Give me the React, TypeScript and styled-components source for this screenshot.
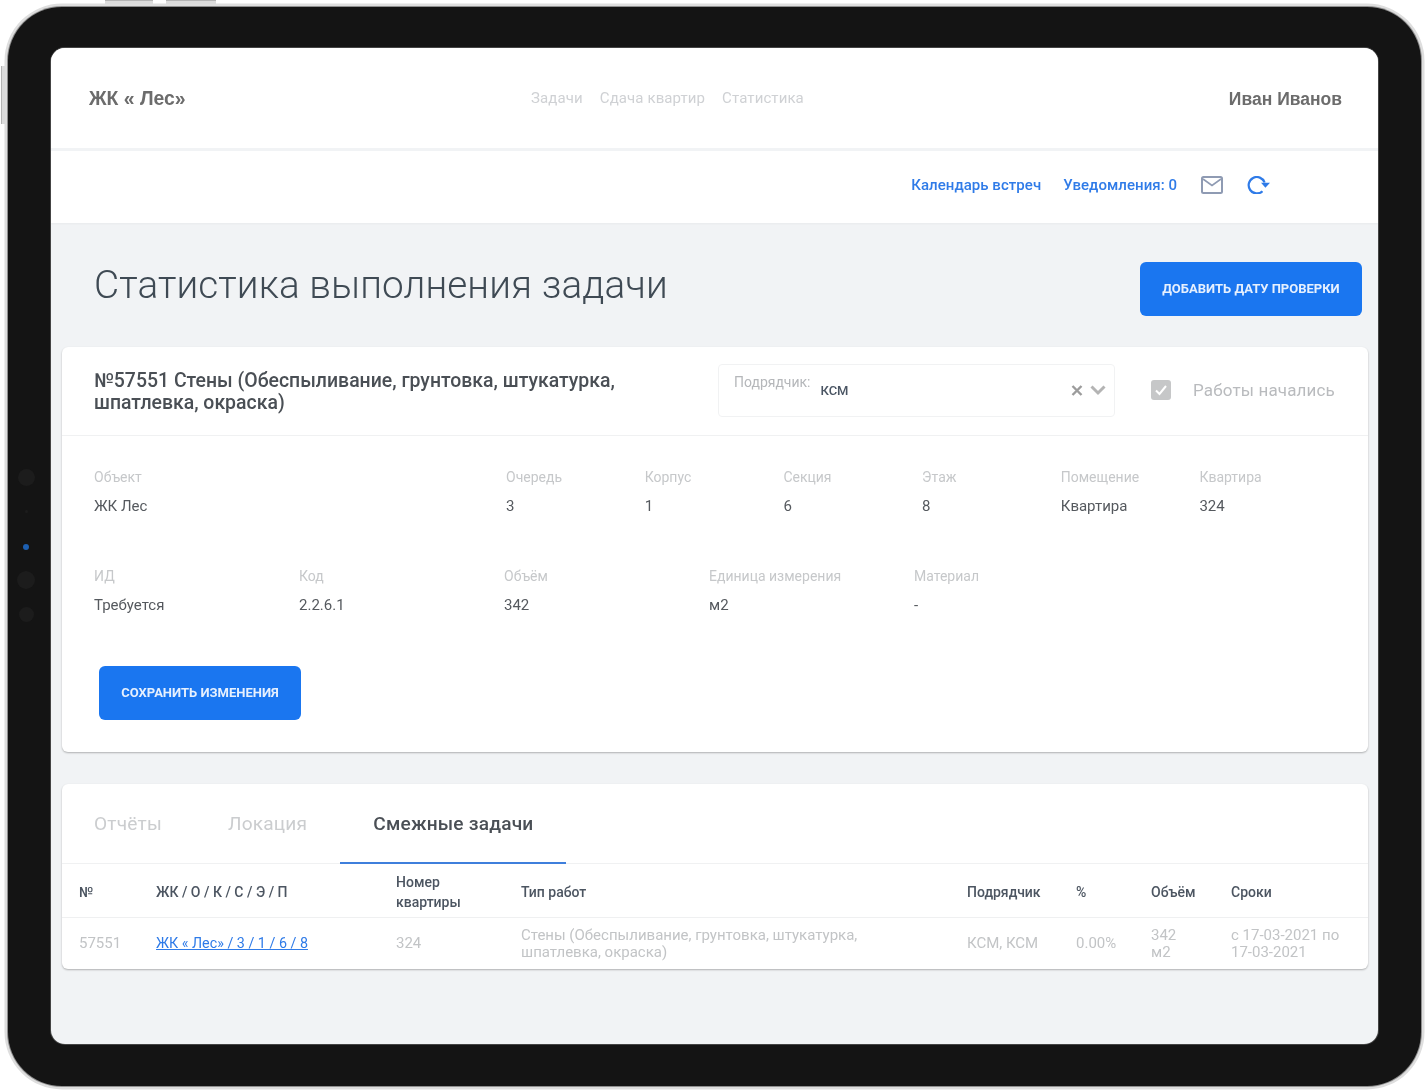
import React from "react";
import styled, { createGlobalStyle } from "styled-components";

const Global = createGlobalStyle`
  html, body { margin: 0; padding: 0; background: #fff; }
  body { font-family: Roboto, "Liberation Sans", sans-serif; }
  * { box-sizing: border-box; }
`;

const Stage = styled.div`
  width: 1426px;
  height: 1092px;
  padding: 7px 5px 6px 8px;
  overflow: hidden;
`;

const Device = styled.div`
  width: 1413px;
  height: 1079px;
  position: relative;
  background: #141414;
  border-radius: 54px;
  box-shadow: 0 0 0 1px #8f8f8f, 0 0 0 3.5px #dedede;
  padding: 41px 43px 42px 43px;
`;

const SideKey = styled.span`
  position: absolute;
  left: -7px;
  top: 59px;
  width: 4px;
  height: 58px;
  background: #dcdcdc;
  border-left: 1px solid #b5b5b5;
`;

const TopKey = styled.span<{ $left: number; $w: number }>`
  position: absolute;
  top: -7px;
  left: ${(p) => p.$left}px;
  width: ${(p) => p.$w}px;
  height: 4px;
  background: #dcdcdc;
  border-top: 1px solid #b5b5b5;
`;

const Lens = styled.span<{ $top: number; $size: number; $blue?: boolean }>`
  position: absolute;
  left: ${(p) => 18 - p.$size / 2}px;
  top: ${(p) => p.$top - p.$size / 2}px;
  width: ${(p) => p.$size}px;
  height: ${(p) => p.$size}px;
  border-radius: 50%;
  background: ${(p) => (p.$blue ? "#1d5fb0" : "#1c1c1c")};
`;

const Screen = styled.div`
  height: 100%;
  background: #f1f3f5;
  border-radius: 14px;
  overflow: hidden;
  display: flex;
  flex-direction: column;
  box-shadow: 0 0 0 1px #444;
  filter: blur(0.6px);
`;

const Header = styled.header`
  height: 100px;
  flex: none;
  background: #fff;
  display: grid;
  grid-template-columns: 1fr auto 1fr;
  align-items: center;
  padding: 1px 36px 0 38px;
`;

const Brand = styled.div`
  font-family: "Liberation Sans", Arial, sans-serif;
  font-weight: 700;
  font-size: 19.4px;
  color: #6c6c6c;
`;

const Nav = styled.nav`
  display: flex;
  gap: 17px;
  font-size: 15px;
  letter-spacing: 0.1px;
  color: #cfd1d4;
  margin: 0 96px 2px 0;
`;

const User = styled.div`
  justify-self: end;
  font-family: "Liberation Sans", Arial, sans-serif;
  font-weight: 700;
  font-size: 17.5px;
  color: #6c6c6c;
  margin-top: 1px;
`;

const SubBar = styled.div`
  height: 72px;
  flex: none;
  margin-top: 3px;
  background: #fff;
  display: flex;
  align-items: center;
  justify-content: flex-end;
  padding: 0 108px 4px 0;
  box-shadow: 0 1px 2px rgba(0, 0, 0, 0.04);
`;

const SubLink = styled.a`
  font-size: 15px;
  font-weight: 500;
  color: #2f7be8;
  letter-spacing: 0.05px;
  margin-right: 22px;
`;

const IconSlot = styled.span`
  display: flex;
  margin-left: 2px;
  margin-right: 24px;
  &:last-child { margin: 0; }
`;

const TitleRow = styled.div`
  display: flex;
  justify-content: space-between;
  align-items: flex-start;
  padding: 39px 16px 31px 43px;
`;

const Title = styled.h1`
  margin: 0;
  font-size: 38.7px;
  font-weight: 300;
  line-height: 46px;
  color: #3f4a54;
  letter-spacing: 0.1px;
`;

const Primary = styled.button<{ $w: number }>`
  width: ${(p) => p.$w}px;
  height: 54px;
  border: 0;
  border-radius: 6px;
  background: #1a76f0;
  color: #e6f0fe;
  font-family: Roboto, sans-serif;
  font-size: 13px;
  font-weight: 700;
  text-transform: uppercase;
  padding: 0 0 2px;
`;

const Card = styled.section`
  margin: 0 10px 0 11px;
  background: #fff;
  border-radius: 6px;
  box-shadow: 0 1px 2px rgba(0, 0, 0, 0.28);
`;

const CardTop = styled.div`
  height: 89px;
  display: flex;
  align-items: center;
  border-bottom: 1px solid #f0f1f2;
  padding: 0 32px;
`;

const TaskName = styled.h2`
  margin: 2px 0 0;
  width: 624px;
  flex: none;
  padding-right: 80px;
  font-size: 19.45px;
  font-weight: 500;
  line-height: 22.5px;
  color: #4a4f55;
`;

const Select = styled.div`
  width: 397px;
  height: 53px;
  flex: none;
  margin-bottom: 2px;
  border: 1px solid #f1f2f3;
  border-radius: 4px;
  display: flex;
  align-items: flex-start;
  padding: 9px 8px 0 15px;
`;

const SelectLabel = styled.span`
  font-size: 14px;
  color: #b5b7ba;
  margin-right: 9px;
`;

const SelectValue = styled.span`
  font-size: 13px;
  font-weight: 500;
  color: #4a5563;
  margin: 9px 0 0 1px;
  flex: 1;
`;

const SelectIcons = styled.span`
  display: flex;
  align-items: center;
  gap: 7px;
  margin-top: 10px;
`;

const Check = styled.label`
  display: flex;
  align-items: center;
  margin: 0 0 2px 36px;
  font-size: 17px;
  color: #b9bbbe;
  gap: 22px;
  white-space: nowrap;
  letter-spacing: 0.15px;
`;

const Box = styled.span`
  width: 20px;
  height: 20px;
  border-radius: 3px;
  background: #c6c7c8;
  display: flex;
  align-items: center;
  justify-content: center;
`;

const Fields = styled.div<{ $cols: string; $top: number }>`
  display: grid;
  grid-template-columns: ${(p) => p.$cols};
  padding: ${(p) => p.$top}px 32px 0;
`;

const Field = styled.div`
  display: flex;
  flex-direction: column;
  gap: 10.5px;
`;

const FieldLabel = styled.span`
  font-size: 14px;
  line-height: 18px;
  color: #c6c8ca;
`;

const FieldValue = styled.span`
  font-size: 15px;
  line-height: 18px;
  color: #55595e;
`;

const SaveRow = styled.div`
  padding: 52.5px 0 32px 37px;
  display: flex;
`;

const TableCard = styled(Card)`
  margin-top: 32px;
`;

const Tabs = styled.div`
  display: flex;
  height: 80px;
  border-bottom: 1px solid #f0f1f2;
`;

const Tab = styled.div<{ $active?: boolean }>`
  padding: 0 33px;
  display: flex;
  align-items: center;
  font-size: 19.1px;
  font-weight: ${(p) => (p.$active ? 500 : 400)};
  color: ${(p) => (p.$active ? "#4a4f55" : "#cbcdcf")};
  border-bottom: 2px solid ${(p) => (p.$active ? "#3f7fdc" : "transparent")};
  margin-bottom: -1px;
  letter-spacing: 0.2px;
  &:first-child { padding-left: 32px; }
`;

const GridRow = styled.div<{ $h: number; $head?: boolean }>`
  display: grid;
  grid-template-columns: 77px 240px 125px 446px 109px 75px 80px 1fr;
  align-items: center;
  height: ${(p) => p.$h}px;
  padding: ${(p) => (p.$head ? "2px" : "0")} 17px 0;
  border-bottom: ${(p) => (p.$head ? "1px solid #eff0f1" : "0")};
`;

const Th = styled.div`
  font-size: 14px;
  font-weight: 500;
  line-height: 20px;
  color: #4c5561;
`;

const Td = styled.div`
  font-size: 15px;
  line-height: 17px;
  color: #c2c4c6;
`;

const RowLink = styled.a`
  font-size: 14.3px;
  color: #2f7be8;
  text-decoration: underline;
`;

const Mail = () => (
  <svg width="22" height="18" viewBox="0 0 22 18" fill="none">
    <rect x="1" y="1" width="20" height="16" rx="1.5" stroke="#8f9bb3" strokeWidth="2" />
    <path d="M2 3l9 6.5L20 3" stroke="#8f9bb3" strokeWidth="1.6" />
  </svg>
);

const Refresh = () => (
  <svg width="23" height="18" viewBox="0 0 23 18" fill="none">
    <path d="M15.5 15.2A8.2 8.2 0 1 1 17.6 6.5" stroke="#2f7be8" strokeWidth="2.2" />
    <path d="M14 6.8h9l-4.6 5z" fill="#2f7be8" />
  </svg>
);

const Cross = () => (
  <svg width="12" height="12" viewBox="0 0 12 12">
    <path d="M1.5 2l9 9M10.5 2l-9 9" stroke="#9c9c9c" strokeWidth="2.4" />
  </svg>
);

const Chevron = () => (
  <svg width="16" height="12" viewBox="0 0 16 12" fill="none">
    <path d="M1.5 2.5L8 9l6.5-6.5" stroke="#b4b4b4" strokeWidth="3" />
  </svg>
);

const Tick = () => (
  <svg width="14" height="14" viewBox="0 0 14 14" fill="none">
    <path d="M2 7.5l3.5 3.5L12 3" stroke="#fff" strokeWidth="2" />
  </svg>
);

const row1 = [
  ["Объект", "ЖК Лес"],
  ["Очередь", "3"],
  ["Корпус", "1"],
  ["Секция", "6"],
  ["Этаж", "8"],
  ["Помещение", "Квартира"],
  ["Квартира", "324"],
];

const row2 = [
  ["ИД", "Требуется"],
  ["Код", "2.2.6.1"],
  ["Объём", "342"],
  ["Единица измерения", "м2"],
  ["Материал", "-"],
];

export default function App() {
  return (
    <Stage>
      <Global />
      <Device>
        <SideKey />
        <TopKey $left={97} $w={48} />
        <TopKey $left={158} $w={50} />
        <Lens $top={470} $size={17} />
        <Lens $top={504} $size={3} />
        <Lens $top={540} $size={6} $blue />
        <Lens $top={573} $size={18} />
        <Lens $top={607} $size={15} />
        <Screen>
          <Header>
            <Brand>ЖК « Лес»</Brand>
            <Nav>
              <span>Задачи</span>
              <span>Сдача квартир</span>
              <span>Статистика</span>
            </Nav>
            <User>Иван Иванов</User>
          </Header>
          <SubBar>
            <SubLink>Календарь встреч</SubLink>
            <SubLink>Уведомления: 0</SubLink>
            <IconSlot><Mail /></IconSlot>
            <IconSlot><Refresh /></IconSlot>
          </SubBar>
          <TitleRow>
            <Title>Статистика выполнения задачи</Title>
            <Primary $w={222}>Добавить дату проверки</Primary>
          </TitleRow>
          <Card>
            <CardTop>
              <TaskName>№57551 Стены (Обеспыливание, грунтовка, штукатурка, шпатлевка, окраска)</TaskName>
              <Select>
                <SelectLabel>Подрядчик:</SelectLabel>
                <SelectValue>КСМ</SelectValue>
                <SelectIcons><Cross /><Chevron /></SelectIcons>
              </Select>
              <Check><Box><Tick /></Box>Работы начались</Check>
            </CardTop>
            <Fields $cols="412px repeat(6, 138.7px)" $top={32}>
              {row1.map(([l, v]) => (
                <Field key={l}><FieldLabel>{l}</FieldLabel><FieldValue>{v}</FieldValue></Field>
              ))}
            </Fields>
            <Fields $cols="repeat(5, 205px)" $top={52.5}>
              {row2.map(([l, v]) => (
                <Field key={l}><FieldLabel>{l}</FieldLabel><FieldValue>{v}</FieldValue></Field>
              ))}
            </Fields>
            <SaveRow><Primary $w={202}>Сохранить изменения</Primary></SaveRow>
          </Card>
          <TableCard>
            <Tabs>
              <Tab>Отчёты</Tab>
              <Tab>Локация</Tab>
              <Tab $active>Смежные задачи</Tab>
            </Tabs>
            <GridRow $h={54} $head>
              <Th>№</Th>
              <Th>ЖК / О / К / С / Э / П</Th>
              <Th>Номер<br />квартиры</Th>
              <Th>Тип работ</Th>
              <Th>Подрядчик</Th>
              <Th>%</Th>
              <Th>Объём</Th>
              <Th>Сроки</Th>
            </GridRow>
            <GridRow $h={51}>
              <Td>57551</Td>
              <Td><RowLink>ЖК « Лес» / 3 / 1 / 6 / 8</RowLink></Td>
              <Td>324</Td>
              <Td>Стены (Обеспыливание, грунтовка, штукатурка,<br />шпатлевка, окраска)</Td>
              <Td>КСМ, КСМ</Td>
              <Td>0.00%</Td>
              <Td>342<br />м2</Td>
              <Td>с 17-03-2021 по<br />17-03-2021</Td>
            </GridRow>
          </TableCard>
        </Screen>
      </Device>
    </Stage>
  );
}
